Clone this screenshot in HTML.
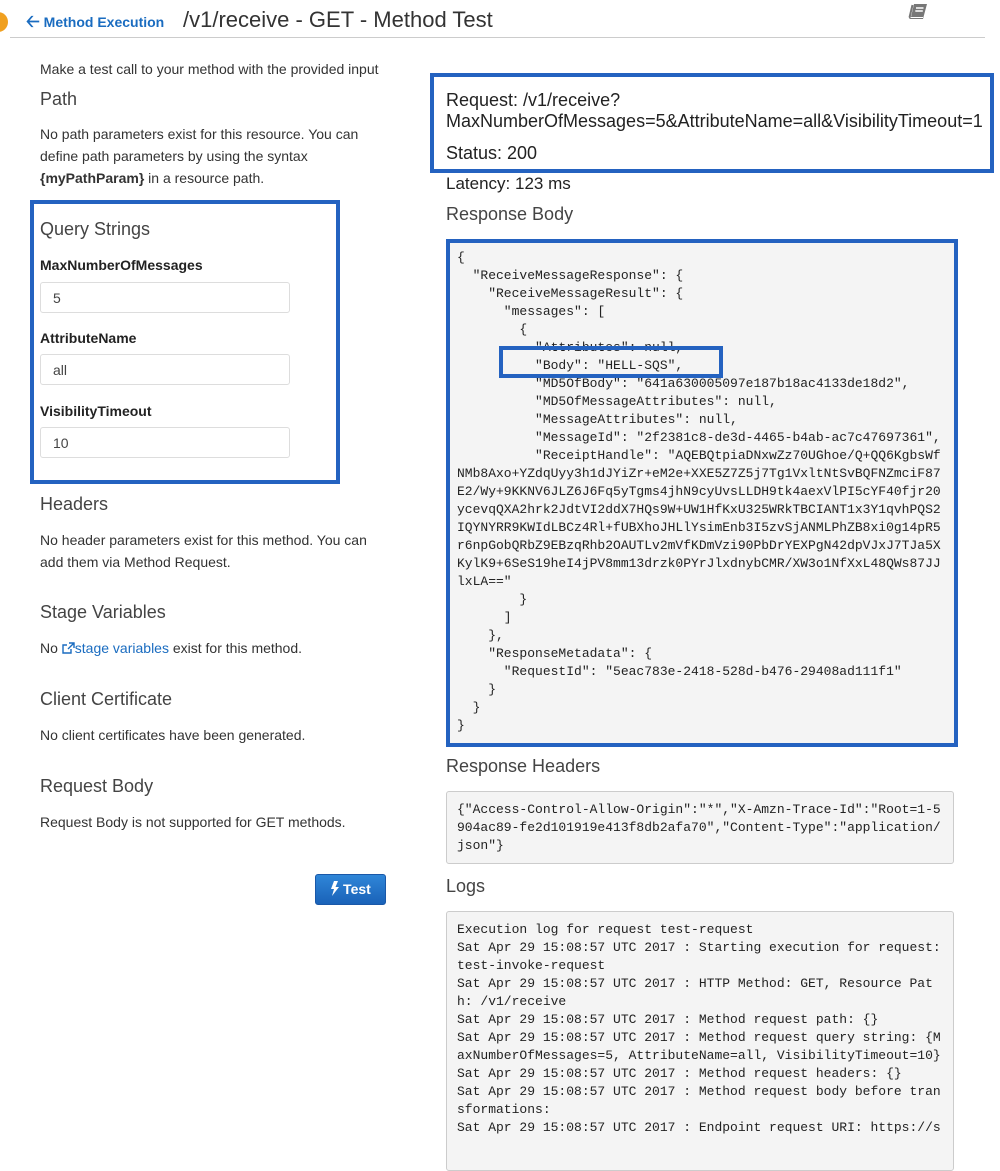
<!DOCTYPE html>
<html><head><meta charset="utf-8"><style>
*{margin:0;padding:0;box-sizing:border-box}
body{width:1000px;height:1139px;overflow:hidden;background:#fff;font-family:"Liberation Sans",sans-serif;color:#333;position:relative}
.a{position:absolute;white-space:nowrap}
.p{font-size:14px;line-height:22px}
.h{font-size:18px;color:#444}
.b{font-weight:bold;font-size:14px;color:#222}
.in{position:absolute;left:40px;width:250px;height:31px;border:1px solid #ddd;border-radius:3px;font-size:14px;padding:6px 12px;line-height:18px;color:#444}
pre{position:absolute;font-family:"Liberation Mono",monospace;font-size:13px;line-height:18px;color:#222;background:#f4f4f4;border:1px solid #ccc;border-radius:3px;padding:9px 10px;white-space:pre}
.blue{position:absolute;border:4px solid #2462c0}
</style></head><body>
<div class="a" style="left:-12px;top:12px;width:20px;height:20px;border-radius:50%;background:#f0a020"></div>
<div class="a" style="left:26px;top:14px;font-size:14px;font-weight:bold;color:#1a6cc0"><span style="font-size:17px;line-height:14px">&#129120;</span> Method Execution</div>
<div class="a" style="left:183px;top:7px;font-size:22px;color:#333">/v1/receive - GET - Method Test</div>
<svg class="a" style="left:906px;top:3px" width="22" height="20" viewBox="0 0 22 20"><path d="M8 1h13l-3.5 13H5z" fill="#777"/><path d="M5 14h12.5L17 16H4.5C2.5 16 2.5 13 4.5 13z" fill="#777"/><path d="M10 5h7.5M9.3 8h7.5" stroke="#fff" stroke-width="1.4"/><path d="M4.5 14.5h12.5" stroke="#fff" stroke-width="1"/><path d="M3.5 14.5L6.5 2" stroke="#777" stroke-width="2"/></svg>
<div class="a" style="left:10px;top:37px;width:975px;height:1px;background:#ccc"></div>

<div class="a p" style="left:40px;top:58px">Make a test call to your method with the provided input</div>
<div class="a h" style="left:40px;top:89px">Path</div>
<div class="a p" style="left:40px;top:123px">No path parameters exist for this resource. You can<br>define path parameters by using the syntax<br><b>{myPathParam}</b> in a resource path.</div>

<div class="blue" style="left:30px;top:200px;width:310px;height:284px"></div>
<div class="a h" style="left:40px;top:219px">Query Strings</div>
<div class="a b" style="left:40px;top:257px">MaxNumberOfMessages</div>
<div class="in" style="top:282px">5</div>
<div class="a b" style="left:40px;top:330px">AttributeName</div>
<div class="in" style="top:354px">all</div>
<div class="a b" style="left:40px;top:403px">VisibilityTimeout</div>
<div class="in" style="top:427px">10</div>

<div class="a h" style="left:40px;top:494px">Headers</div>
<div class="a p" style="left:40px;top:529px">No header parameters exist for this method. You can<br>add them via Method Request.</div>
<div class="a h" style="left:40px;top:602px">Stage Variables</div>
<div class="a p" style="left:40px;top:637px">No <span style="color:#1a6cc0"><svg width="13" height="12" viewBox="0 0 13 12" style="vertical-align:-1px"><path d="M9 7v4H1V3h4M7 1h5v5M12 1L6 7" fill="none" stroke="#1a6cc0" stroke-width="1.4"/></svg>stage variables</span> exist for this method.</div>
<div class="a h" style="left:40px;top:689px">Client Certificate</div>
<div class="a p" style="left:40px;top:724px">No client certificates have been generated.</div>
<div class="a h" style="left:40px;top:776px">Request Body</div>
<div class="a p" style="left:40px;top:811px">Request Body is not supported for GET methods.</div>
<div class="a" style="left:315px;top:874px;width:71px;height:31px;border-radius:3px;background:linear-gradient(#2f86d8,#1a62b8);border:1px solid #1a58a8;color:#fff;font-weight:bold;font-size:14px;text-align:center;line-height:29px"><svg width="9" height="15" viewBox="0 0 9 15" style="vertical-align:-2px"><path d="M4 0h4L5.5 6H9L2 15l2-7H1z" fill="#fff"/></svg> Test</div>

<div class="blue" style="left:430px;top:73px;width:564px;height:100px"></div>
<div class="a" style="left:446px;top:90px;font-size:18px;line-height:21px;color:#222">Request: /v1/receive?<br>MaxNumberOfMessages=5&amp;AttributeName=all&amp;VisibilityTimeout=1</div>
<div class="a" style="left:446px;top:143px;font-size:18px;color:#222">Status: 200</div>
<div class="a" style="left:446px;top:174px;font-size:17px;color:#222">Latency: 123 ms</div>
<div class="a h" style="left:446px;top:204px">Response Body</div>
<pre style="left:446px;top:239px;width:511px;height:507px">{
  "ReceiveMessageResponse": {
    "ReceiveMessageResult": {
      "messages": [
        {
          "Attributes": null,
          "Body": "HELL-SQS",
          "MD5OfBody": "641a630005097e187b18ac4133de18d2",
          "MD5OfMessageAttributes": null,
          "MessageAttributes": null,
          "MessageId": "2f2381c8-de3d-4465-b4ab-ac7c47697361",
          "ReceiptHandle": "AQEBQtpiaDNxwZz70UGhoe/Q+QQ6KgbsWf
NMb8Axo+YZdqUyy3h1dJYiZr+eM2e+XXE5Z7Z5j7Tg1VxltNtSvBQFNZmciF87
E2/Wy+9KKNV6JLZ6J6Fq5yTgms4jhN9cyUvsLLDH9tk4aexVlPI5cYF40fjr20
ycevqQXA2hrk2JdtVI2ddX7HQs9W+UW1HfKxU325WRkTBCIANT1x3Y1qvhPQS2
IQYNYRR9KWIdLBCz4Rl+fUBXhoJHLlYsimEnb3I5zvSjANMLPhZB8xi0g14pR5
r6npGobQRbZ9EBzqRhb2OAUTLv2mVfKDmVzi90PbDrYEXPgN42dpVJxJ7TJa5X
KylK9+6SeS19heI4jPV8mm13drzk0PYrJlxdnybCMR/XW3o1NfXxL48QWs87JJ
lxLA=="
        }
      ]
    },
    "ResponseMetadata": {
      "RequestId": "5eac783e-2418-528d-b476-29408ad111f1"
    }
  }
}</pre>
<div class="blue" style="left:446px;top:239px;width:512px;height:508px"></div>
<div class="blue" style="left:499px;top:346px;width:224px;height:32px"></div>
<div class="a h" style="left:446px;top:756px">Response Headers</div>
<pre style="left:446px;top:791px;width:508px;height:73px">{"Access-Control-Allow-Origin":"*","X-Amzn-Trace-Id":"Root=1-5
904ac89-fe2d101919e413f8db2afa70","Content-Type":"application/
json"}</pre>
<div class="a h" style="left:446px;top:876px">Logs</div>
<pre style="left:446px;top:911px;width:508px;height:260px">Execution log for request test-request
Sat Apr 29 15:08:57 UTC 2017 : Starting execution for request:
test-invoke-request
Sat Apr 29 15:08:57 UTC 2017 : HTTP Method: GET, Resource Pat
h: /v1/receive
Sat Apr 29 15:08:57 UTC 2017 : Method request path: {}
Sat Apr 29 15:08:57 UTC 2017 : Method request query string: {M
axNumberOfMessages=5, AttributeName=all, VisibilityTimeout=10}
Sat Apr 29 15:08:57 UTC 2017 : Method request headers: {}
Sat Apr 29 15:08:57 UTC 2017 : Method request body before tran
sformations:
Sat Apr 29 15:08:57 UTC 2017 : Endpoint request URI: https://s</pre>
</body></html>
